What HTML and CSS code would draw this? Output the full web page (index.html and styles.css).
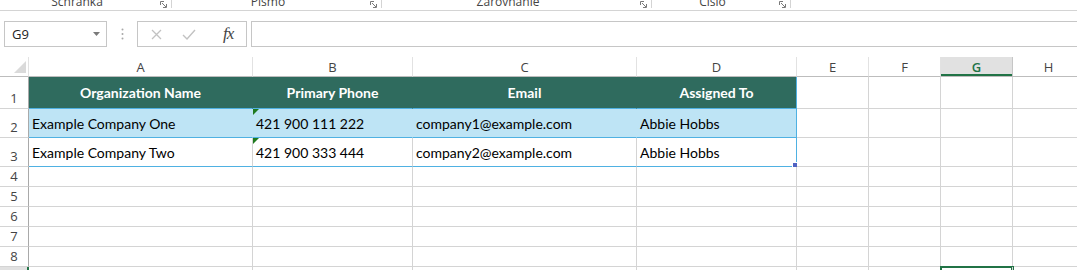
FILE: index.html
```html
<!DOCTYPE html>
<html>
<head>
<meta charset="utf-8">
<link rel="stylesheet" href="styles.css">
</head>
<body>
<div class="ribbon">
  <div class="grp g1"><span class="glabel">Schránka</span><svg class="launch" width="7" height="7" viewBox="0 0 7 7"><path d="M0.5 4V0.5H4M2 2L6 6M3 6.5H6.5V3" fill="none" stroke="#7a7a7a" stroke-width="1"/></svg><span class="gsep"></span></div>
  <div class="grp g2"><span class="glabel">Písmo</span><svg class="launch" width="7" height="7" viewBox="0 0 7 7"><path d="M0.5 4V0.5H4M2 2L6 6M3 6.5H6.5V3" fill="none" stroke="#7a7a7a" stroke-width="1"/></svg><span class="gsep"></span></div>
  <div class="grp g3"><span class="glabel">Zarovnanie</span><svg class="launch" width="7" height="7" viewBox="0 0 7 7"><path d="M0.5 4V0.5H4M2 2L6 6M3 6.5H6.5V3" fill="none" stroke="#7a7a7a" stroke-width="1"/></svg><span class="gsep"></span></div>
  <div class="grp g4"><span class="glabel">Číslo</span><svg class="launch" width="7" height="7" viewBox="0 0 7 7"><path d="M0.5 4V0.5H4M2 2L6 6M3 6.5H6.5V3" fill="none" stroke="#7a7a7a" stroke-width="1"/></svg><span class="gsep"></span></div>
</div>

<div class="fbar">
  <div class="namebox"><span class="nbtext">G9</span><svg class="nbarrow" width="7" height="4" viewBox="0 0 7 4"><path d="M0 0H7L3.5 4Z" fill="#7a7a7a"/></svg></div>
  <div class="dots"><svg width="3" height="12" viewBox="0 0 3 12"><circle cx="1.5" cy="1.5" r="1" fill="#a8a8a8"/><circle cx="1.5" cy="6" r="1" fill="#a8a8a8"/><circle cx="1.5" cy="10.5" r="1" fill="#a8a8a8"/></svg></div>
  <div class="fbtns">
    <svg class="fbx" width="11" height="11" viewBox="0 0 11 11"><path d="M1 1L10 10M10 1L1 10" stroke="#c2c2c2" stroke-width="1.3" fill="none"/></svg>
    <svg class="fbok" width="14" height="11" viewBox="0 0 14 11"><path d="M1 6L5 10L13 1" stroke="#c2c2c2" stroke-width="1.4" fill="none"/></svg>
    <span class="fx">fx</span>
  </div>
  <div class="finput"></div>
</div>

<div class="sheet">
  <!-- column header row -->
  <div class="c corner"><svg width="12" height="12" viewBox="0 0 12 12"><path d="M12 0V12H0Z" fill="#dadada"/></svg></div>
  <div class="c ch">A</div>
  <div class="c ch">B</div>
  <div class="c ch">C</div>
  <div class="c ch">D</div>
  <div class="c ch">E</div>
  <div class="c ch">F</div>
  <div class="c ch chsel">G</div>
  <div class="c ch">H</div>

  <!-- row 1 -->
  <div class="c rh">1</div>
  <div class="c hd">Organization Name</div>
  <div class="c hd">Primary Phone</div>
  <div class="c hd">Email</div>
  <div class="c hd last">Assigned To</div>
  <div class="c"></div>
  <div class="c"></div>
  <div class="c"></div>
  <div class="c"></div>

  <!-- row 2 -->
  <div class="c rh">2</div>
  <div class="c dt r2">Example Company One</div>
  <div class="c dt r2 txtnum"><span class="tri"></span>421 900 111 222</div>
  <div class="c dt r2">company1@example.com</div>
  <div class="c dt r2 last">Abbie Hobbs</div>
  <div class="c"></div>
  <div class="c"></div>
  <div class="c"></div>
  <div class="c"></div>

  <!-- row 3 -->
  <div class="c rh">3</div>
  <div class="c dt r3">Example Company Two</div>
  <div class="c dt r3 txtnum"><span class="tri"></span>421 900 333 444</div>
  <div class="c dt r3">company2@example.com</div>
  <div class="c dt r3 last handle">Abbie Hobbs<span class="fill"></span></div>
  <div class="c"></div>
  <div class="c"></div>
  <div class="c"></div>
  <div class="c"></div>

  <!-- rows 4-8 -->
  <div class="c rh">4</div><div class="c"></div><div class="c"></div><div class="c"></div><div class="c"></div><div class="c"></div><div class="c"></div><div class="c"></div><div class="c"></div>
  <div class="c rh">5</div><div class="c"></div><div class="c"></div><div class="c"></div><div class="c"></div><div class="c"></div><div class="c"></div><div class="c"></div><div class="c"></div>
  <div class="c rh">6</div><div class="c"></div><div class="c"></div><div class="c"></div><div class="c"></div><div class="c"></div><div class="c"></div><div class="c"></div><div class="c"></div>
  <div class="c rh">7</div><div class="c"></div><div class="c"></div><div class="c"></div><div class="c"></div><div class="c"></div><div class="c"></div><div class="c"></div><div class="c"></div>
  <div class="c rh">8</div><div class="c"></div><div class="c"></div><div class="c"></div><div class="c"></div><div class="c"></div><div class="c"></div><div class="c"></div><div class="c"></div>

  <!-- row 9 -->
  <div class="c rh rhsel">9</div><div class="c"></div><div class="c"></div><div class="c"></div><div class="c"></div><div class="c"></div><div class="c"></div><div class="c selcell"></div><div class="c"></div>
</div>
</body>
</html>
```

FILE: styles.css
```css
* { box-sizing: border-box; }
html, body {
  margin: 0;
  padding: 0;
  background: #ffffff;
}
body {
  width: 1077px;
  height: 270px;
  overflow: hidden;
  font-family: "Open Sans", "Noto Sans", sans-serif;
}

/* ribbon group labels */
.ribbon {
  height: 11px;
  border-bottom: 1px solid #d4d4d4;
  display: flex;
  overflow: hidden;
}
.grp {
  display: flex;
  align-items: flex-start;
  height: 10px;
}
.g1 { width: 172px; }
.g2 { width: 210px; }
.g3 { width: 270px; }
.g4 { width: 139px; }
.glabel {
  flex: 1;
  text-align: center;
  padding-right: 6px;
  font-size: 12px;
  line-height: 14px;
  margin-top: -5px;
  color: #444444;
  white-space: nowrap;
}
.launch {
  flex: none;
  margin-top: 1px;
}
.gsep {
  flex: none;
  width: 1px;
  height: 8px;
  margin-left: 4px;
  background: #d4d4d4;
}

/* formula bar */
.fbar {
  display: flex;
  align-items: center;
  height: 26px;
  margin-top: 10px;
}
.namebox {
  margin-left: 4px;
  width: 103px;
  height: 26px;
  border: 1px solid #c6c6c6;
  display: flex;
  align-items: center;
  padding-left: 7px;
  padding-right: 6px;
}
.nbtext {
  flex: 1;
  font-size: 13px;
  color: #222222;
}
.nbarrow { display: block; }
.dots {
  width: 30px;
  display: flex;
  justify-content: center;
}
.dots svg { display: block; }
.fbtns {
  width: 110px;
  height: 26px;
  border: 1px solid #c6c6c6;
  display: flex;
  align-items: center;
  padding-left: 13px;
}
.fbtns svg { display: block; flex: none; }
.fbok { margin-left: 20px; }
.fx {
  margin-left: 27px;
  font-family: "Liberation Serif", "DejaVu Serif", serif;
  font-style: italic;
  font-size: 17px;
  line-height: 20px;
  color: #444444;
  letter-spacing: -1px;
}
.finput {
  flex: 1;
  margin-left: 4px;
  height: 26px;
  border: 1px solid #c6c6c6;
  border-right: none;
}

/* sheet grid */
.sheet {
  margin-top: 10px;
  display: grid;
  grid-template-columns: 29px 224px 160px 224px 160px 72px 72px 72px 72px;
  grid-template-rows: 20px 32px 29px 29px 20px 20px 20px 20px 20px 20px;
  height: 213px;
  overflow: hidden;
  width: 1084px;
}
.c {
  position: relative;
  border-right: 1px solid #d4d4d4;
  border-bottom: 1px solid #d4d4d4;
  display: flex;
  align-items: center;
  padding: 0 3px;
  font-family: Lato, "Carlito", sans-serif;
  font-size: 14px;
  color: #000000;
  white-space: nowrap;
  overflow: visible;
}
.corner {
  border-right-color: #e2e2e2;
  border-bottom-color: #bdbdbd;
  justify-content: flex-end;
  align-items: flex-end;
  padding: 0 2px 3px 0;
}
.corner svg { display: block; }
.ch {
  justify-content: center;
  font-family: "Open Sans", "Noto Sans", sans-serif;
  font-size: 13px;
  color: #444444;
  border-right-color: #e2e2e2;
  border-bottom-color: #bdbdbd;
  padding-top: 1px;
}
.chsel {
  background: #e1e1e1;
  color: #217346;
  font-weight: 600;
  box-shadow: inset 0 -2px 0 #217346;
  border-right-color: #c6c6c6;
}
.rh {
  justify-content: center;
  align-items: flex-end;
  padding: 0 0 3px 0;
  font-family: "Open Sans", "Noto Sans", sans-serif;
  font-size: 13px;
  line-height: 14px;
  color: #444444;
  border-right-color: #a9a9a9;
}
.rhsel {
  background: #e1e1e1;
  box-shadow: inset -1px 0 0 #217346;
  border-right-color: #217346;
}
.hd {
  background: #2f6b5e;
  color: #ffffff;
  font-weight: 700;
  justify-content: center;
  border-right-color: #2f6b5e;
  border-bottom-color: #4fb1e2;
}
.dt { padding-top: 0; }
.r2 {
  background: #bee4f5;
  border-right-color: #bee4f5;
  border-bottom-color: #4fb1e2;
}
.r3 {
  border-bottom-color: #4fb1e2;
}
.last { border-right-color: #4fb1e2; }
.tri {
  position: absolute;
  left: 0;
  top: 0;
  width: 0;
  height: 0;
  border-top: 6px solid #1f7a1f;
  border-right: 6px solid transparent;
}
.fill {
  position: absolute;
  right: -1px;
  bottom: -1px;
  width: 5px;
  height: 5px;
  background: #4f62c2;
  border-left: 1px solid #ffffff;
  border-top: 1px solid #ffffff;
}
.selcell {
  box-shadow: 0 0 0 1px #217346, inset 0 0 0 1px #217346;
}
```
